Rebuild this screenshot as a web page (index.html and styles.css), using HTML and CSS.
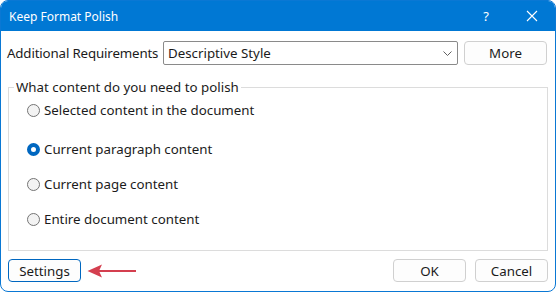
FILE: index.html
```html
<!doctype html>
<html>
<head>
  <title>Keep Format Polish</title>
  <link rel="stylesheet" href="styles.css">
</head>
<body>

	<div class="dialog">
		<div class="titlebar">
			<span class="title">Keep Format Polish</span>
			<span class="help">?</span>
			<svg class="close" width="12" height="12" viewBox="0 0 12 12">
				<path d="M1 1 L11 11 M11 1 L1 11" stroke="#fff" stroke-width="1.1" fill="none"/>
			</svg>
		</div>

		<div class="content">
			<div class="req-row">
				<span class="req-label">Additional Requirements</span>
				<div class="combo">
					<span class="combo-value">Descriptive Style</span>
					<svg class="chevron" width="9" height="5" viewBox="0 0 9 5">
						<path d="M0.5 0.5 L4.5 4.5 L8.5 0.5" stroke="#606060" stroke-width="1" fill="none"/>
					</svg>
				</div>
				<button class="btn btn-more">More</button>
			</div>

			<fieldset class="scope">
				<legend>What content do you need to polish</legend>
				<div class="radio-list">
					<label class="radio radio-first"><span class="dot"></span>Selected content in the document</label>
					<label class="radio"><span class="dot checked"></span>Current paragraph content</label>
					<label class="radio"><span class="dot"></span>Current page content</label>
					<label class="radio"><span class="dot"></span>Entire document content</label>
				</div>
			</fieldset>

			<div class="footer">
				<button class="btn btn-settings">Settings</button>
				<svg class="pointer" width="50" height="16" viewBox="0 0 50 16">
					<path d="M12 8 L49 8" stroke="#d43f4f" stroke-width="2.2"/>
					<path d="M0.5 8 L15 1.5 L12 8 L15 14.5 Z" fill="#d43f4f"/>
				</svg>
				<span class="spacer"></span>
				<button class="btn">OK</button>
				<button class="btn">Cancel</button>
			</div>
		</div>
	</div>

</body>
</html>
```

FILE: styles.css
```css
	html, body {height: 100%}
	body {
		margin: 0;
		padding: 0;
		background: #fff;
		font-family: "Noto Sans", "Open Sans", sans-serif;
		color: #1b1b1b;
	}

	.dialog {
		width: 556px;
		height: 292px;
		box-sizing: border-box;
		border: 1px solid #0a78d4;
		border-radius: 8px;
		overflow: hidden;
		display: flex;
		flex-direction: column;
	}

	.titlebar {
		height: 30px;
		background: #0078d4;
		color: #fff;
		display: flex;
		align-items: center;
		padding-left: 8px;
		font-size: 12px;
	}
	.title {
		flex: 1;
	}
	.help {
		font-size: 13px;
		margin-right: 37px;
	}
	.close {
		margin-right: 17px;
	}

	.content {
		flex: 1;
		display: flex;
		flex-direction: column;
		padding: 10px 7px 9px 7px;
		font-size: 13.3px;
	}

	.req-row {
		display: flex;
		align-items: center;
		height: 24px;
	}
	.req-label {
		white-space: nowrap;
		flex: none;
		width: 150px;
		margin-left: -1px;
		margin-right: 6px;
		letter-spacing: -0.15px;
	}
	.combo {
		flex: 1;
		height: 22px;
		border: 1px solid #8a8a8a;
		border-radius: 2px;
		display: flex;
		align-items: center;
		padding: 0 4px;
		margin-right: 6px;
	}
	.combo-value {
		flex: 1;
	}
	.chevron {
		margin-right: 1px;
	}

	.btn {
		flex: none;
		font-family: inherit;
		font-size: 13.3px;
		color: #1b1b1b;
		background: #fdfdfd;
		border: 1px solid #d0d0d0;
		border-radius: 4px;
		height: 23px;
		width: 73px;
		padding: 0;
		line-height: 20px;
	}
	.btn-more {
		width: 83px;
		height: 24px;
		margin-right: 1px;
	}
	.btn-settings {
		border-color: #0067c0;
	}

	.scope {
		flex: 1;
		margin: 12px 0 8px 0;
		padding: 0;
		border: 1px solid #dcdcdc;
		min-width: 0;
	}
	.scope legend {
		margin-left: 5px;
		padding: 0 2px;
		line-height: 20px;
	}
	.radio-list {
		display: flex;
		flex-direction: column;
		gap: 15px;
		padding: 3px 0 0 18px;
	}
	.radio {
		display: flex;
		align-items: center;
		height: 20px;
	}
	.radio-first {
		margin-bottom: 4px;
	}
	.dot {
		width: 11px;
		height: 11px;
		border: 1px solid #747474;
		border-radius: 50%;
		background: #f3f3f3;
		margin-right: 4px;
		box-sizing: content-box;
	}
	.dot.checked {
		width: 5px;
		height: 5px;
		border: 4px solid #0067c0;
		background: #fff;
	}

	.footer {
		display: flex;
		align-items: center;
		height: 23px;
		gap: 9px;
	}
	.pointer {
		margin-left: -3px;
	}
	.spacer {
		flex: 1;
	}
```
